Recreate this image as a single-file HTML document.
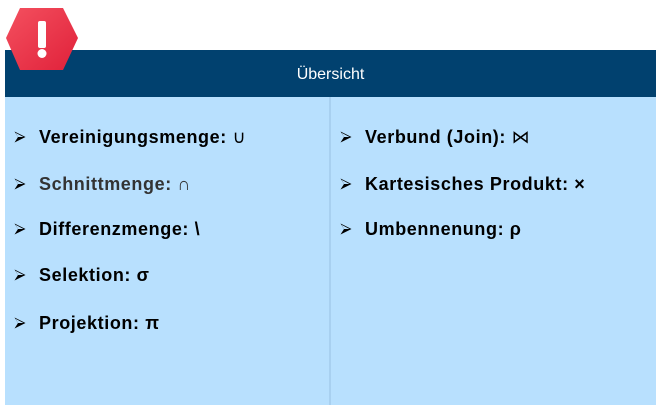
<!DOCTYPE html>
<html><head><meta charset="utf-8"><style>
body{margin:0;width:656px;height:405px;background:#fff;position:relative;overflow:hidden;font-family:"Liberation Sans",Arial,sans-serif}
.hdr{position:absolute;left:5px;top:50px;width:651px;height:47px;background:#01416f;color:#fff;font-size:16px;text-align:center;line-height:49px}
.body{position:absolute;left:5px;top:97px;width:651px;height:308px;background:#b8e0fe}
.div{position:absolute;left:329px;top:97px;width:2px;height:308px;background:#a8d0f0}
.it{position:absolute;font-size:18px;font-weight:bold;color:#000;white-space:nowrap;line-height:20px;letter-spacing:0.6px}
.ar{position:absolute;width:12px;height:12px}
</style></head><body>
<div class="hdr">Übersicht</div>
<div class="body"></div>
<div class="div"></div>
<svg style="position:absolute;left:0;top:0" width="90" height="80">
<defs><linearGradient id="g" x1="0" y1="0" x2="1" y2="1"><stop offset="0" stop-color="#f4505f"/><stop offset="1" stop-color="#e0213a"/></linearGradient></defs>
<polygon points="20,8 63,8 78,38 63,70 20,70 6,38" fill="url(#g)"/>
<rect x="38" y="21" width="8" height="27" rx="2" fill="#fff"/>
<circle cx="42" cy="53.5" r="4.5" fill="#fff"/>
</svg>
<svg width="0" height="0" style="position:absolute"><defs><symbol id="a" viewBox="0 0 12 12"><path d="M0.5,0.5 L11.5,6 L0.5,11.5 L4,6 Z" fill="#000"/><path d="M1.5,1.8 L9.5,6 L4,6 Z" fill="#b8e0fe"/></symbol></defs></svg>
<svg class="ar" style="left:14px;top:131px"><use href="#a"/></svg><div class="it" style="left:39px;top:127px">Vereinigungsmenge: <span style="font-weight:normal">∪</span></div>
<svg class="ar" style="left:14px;top:178px"><use href="#a"/></svg><div class="it" style="left:39px;top:174px;color:#333">Schnittmenge: <span style="font-weight:normal">∩</span></div>
<svg class="ar" style="left:14px;top:223px"><use href="#a"/></svg><div class="it" style="left:39px;top:219px">Differenzmenge: \</div>
<svg class="ar" style="left:14px;top:269px"><use href="#a"/></svg><div class="it" style="left:39px;top:265px">Selektion: σ</div>
<svg class="ar" style="left:14px;top:317px"><use href="#a"/></svg><div class="it" style="left:39px;top:313px">Projektion: π</div>
<svg class="ar" style="left:340px;top:131px"><use href="#a"/></svg><div class="it" style="left:365px;top:127px">Verbund (Join): <span style="font-weight:normal">⋈</span></div>
<svg class="ar" style="left:340px;top:178px"><use href="#a"/></svg><div class="it" style="left:365px;top:174px">Kartesisches Produkt: ×</div>
<svg class="ar" style="left:340px;top:223px"><use href="#a"/></svg><div class="it" style="left:365px;top:219px">Umbennenung: ρ</div>
</body></html>
